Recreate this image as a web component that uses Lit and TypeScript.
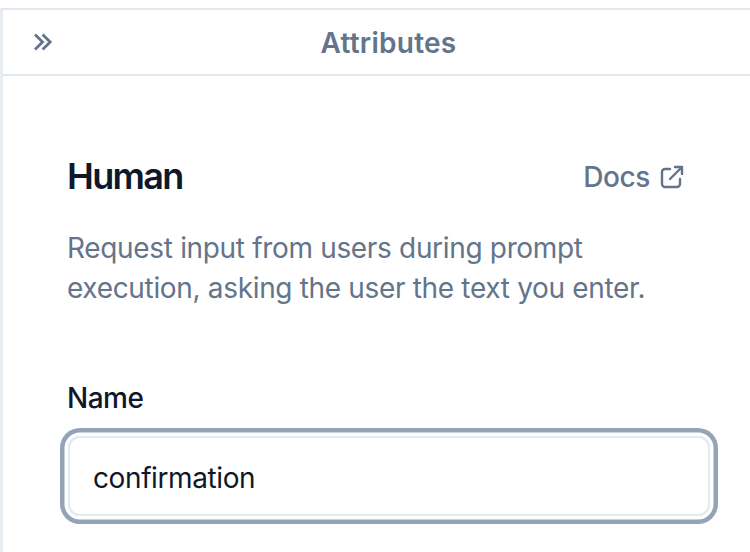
import { LitElement, css, html } from "lit";
import { customElement } from "lit/decorators.js";

@customElement("app-root")
export class AppRoot extends LitElement {
  static styles = css`
    :host {
      display: block;
      height: 552px;
      overflow: hidden;
      background: #fff;
      padding-top: 8px;
      box-sizing: border-box;
      font-family: Inter, "Liberation Sans", sans-serif;
      color: #0f172a;
    }

    .panel {
      height: 544px;
      box-sizing: border-box;
      border-top: 2px solid #e2e8f0;
      border-left: 3px solid #e8edf2;
    }

    .header {
      position: relative;
      display: flex;
      align-items: center;
      justify-content: center;
      height: 66px;
      box-sizing: border-box;
      padding-left: 24px;
      padding-top: 1px;
      border-bottom: 2px solid #e2e8f0;
      color: #64748b;
      font-size: 28px;
      font-weight: 600;
      letter-spacing: 0.25px;
    }

    .toggle {
      position: absolute;
      left: 25px;
      top: 18px;
      display: block;
    }

    .body {
      padding: 0 66px 0 64px;
    }

    .title-row {
      display: flex;
      align-items: center;
      justify-content: space-between;
      margin-top: 76px;
      height: 50px;
    }

    h1 {
      margin: -2px 0 0;
      font-size: 36px;
      font-weight: 600;
      letter-spacing: -1.7px;
      line-height: 50px;
    }

    .docs {
      display: flex;
      align-items: center;
      gap: 10px;
      color: #64748b;
      font-size: 28px;
      font-weight: 500;
      letter-spacing: -0.4px;
    }

    .desc {
      margin: 26px 0 0;
      color: #64748b;
      font-size: 28px;
      letter-spacing: -0.33px;
      line-height: 40px;
      white-space: nowrap;
    }

    label {
      display: block;
      margin-top: 70px;
      font-size: 28px;
      font-weight: 500;
      letter-spacing: -0.5px;
      line-height: 40px;
    }

    .input {
      margin: 18px -26px 0 1px;
      height: 80px;
      box-sizing: border-box;
      display: flex;
      align-items: center;
      padding: 4px 0 0 23px;
      border: 2px solid #e5eaf0;
      border-radius: 12px;
      box-shadow: 0 0 0 3.5px #fff, 0 0 0 8px #94a3b8;
      font-size: 28px;
      letter-spacing: -0.4px;
    }
  `;

  render() {
    return html`
      <div class="panel">
        <div class="header">
          <svg class="toggle" width="28" height="28" viewBox="0 0 24 24" fill="none" stroke="#64748b" stroke-width="2.4">
            <path d="M6 5.5 12.5 12 6 18.5M12.5 5.5 19 12l-6.5 6.5" />
          </svg>
          Attributes
        </div>
        <div class="body">
          <div class="title-row">
            <h1>Human</h1>
            <span class="docs">
              Docs
              <svg width="24" height="24" viewBox="0 0 24 24" fill="none" stroke="#64748b" stroke-width="2.4" stroke-linecap="round" stroke-linejoin="round">
                <path d="M10 4H5a3 3 0 0 0-3 3v12a3 3 0 0 0 3 3h12a3 3 0 0 0 3-3v-5M10 14 22 2M15 2h7v7" />
              </svg>
            </span>
          </div>
          <p class="desc">Request input from users during prompt<br />execution, asking the user the text you enter.</p>
          <label>Name</label>
          <div class="input">confirmation</div>
        </div>
      </div>
    `;
  }
}
